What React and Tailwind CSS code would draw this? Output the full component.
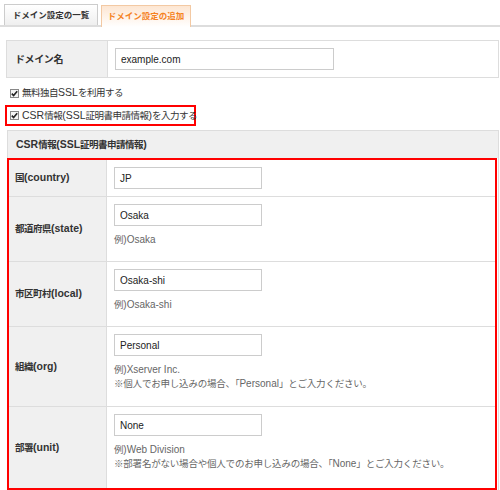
import React from 'react'

const FONT = { fontFamily: '"Liberation Sans", "Noto Sans CJK JP", sans-serif' }

// CJK runs get a narrower setting so that mixed lines keep the reference widths
const CJK = /([\u3000-\u30ff\u4e00-\u9fff\uff00-\uffef※]+)/
function T({ children, cls = 'text-[9.5px] tracking-[-0.5px]' }) {
  return children.split(CJK).map((s, i) =>
    i % 2 ? <span key={i} className={cls}>{s}</span> : s
  )
}

function Check() {
  return (
    <span className="inline-flex w-[9px] h-[9px] border border-[#888] bg-[#f4f4f4] items-center justify-center mr-[3px] shrink-0">
      <svg width="7" height="7" viewBox="0 0 7 7">
        <path d="M0.8 3.6 L2.6 5.5 L6.2 1.2" fill="none" stroke="#222" strokeWidth="1.6" />
      </svg>
    </span>
  )
}

function Field({ value, w = 'w-[148px]' }) {
  return (
    <div className={`${w} h-[22px] border border-[#ccc] flex items-center pl-[5px] text-[10px] text-[#222] bg-white`}>
      {value}
    </div>
  )
}

const rows = [
  { label: '国(country)', value: 'JP', h: 'h-[37px]', hints: [] },
  { label: '都道府県(state)', value: 'Osaka', h: 'h-[65px]', hints: ['例)Osaka'] },
  { label: '市区町村(local)', value: 'Osaka-shi', h: 'h-[65px]', hints: ['例)Osaka-shi'] },
  {
    label: '組織(org)', value: 'Personal', h: 'h-[80px]',
    hints: ['例)Xserver Inc.', '※個人でお申し込みの場合、「Personal」とご入力ください。'],
  },
  {
    label: '部署(unit)', value: 'None', h: 'h-[81px]',
    hints: ['例)Web Division', '※部署名がない場合や個人でのお申し込みの場合、「None」とご入力ください。'],
  },
]

export default function App() {
  return (
    <div className="w-[500px] h-[490px] overflow-hidden bg-white text-[#333]" style={FONT}>
      {/* tabs */}
      <div className="flex items-end gap-[3px] pl-[4px] h-[27px] border-b-2 border-[#ddd]">
        <div className="w-[94px] h-[21px] border border-b-0 border-[#ccc] bg-gradient-to-b from-white to-[#efefef] flex items-center justify-center text-[8.5px] font-bold text-[#333] whitespace-nowrap">
          ドメイン設定の一覧
        </div>
        <div className="w-[90px] h-[22px] -mb-[2px] border border-b-0 border-[#f3c9a3] bg-gradient-to-b from-[#fde6d2] to-white flex items-center justify-center text-[8.5px] font-bold text-[#f5821f] whitespace-nowrap">
          ドメイン設定の追加
        </div>
      </div>

      {/* domain */}
      <div className="mt-[13px] ml-[6px] w-[493px] h-[38px] border border-[#ddd] flex">
        <div className="w-[101px] bg-[#f0f0f0] border-r border-[#ddd] flex items-center pl-[8px] font-bold">
          <span className="text-[10px] tracking-[-0.4px]">ドメイン名</span>
        </div>
        <div className="flex items-center pl-[7px]">
          <Field value="example.com" w="w-[219px]" />
        </div>
      </div>

      {/* options */}
      <div className="mt-[7px] ml-[10px] h-[16px] flex items-center text-[10.5px] whitespace-nowrap">
        <Check />
        <span><T>無料独自SSLを利用する</T></span>
      </div>
      <div className="mt-[4px] ml-[5px] w-[191px] h-[21px] border-2 border-[#f00] flex items-center pl-[3px] text-[10.5px] whitespace-nowrap">
        <Check />
        <span><T>CSR情報(SSL証明書申請情報)を入力する</T></span>
      </div>

      {/* CSR table */}
      <div className="mt-[4px] ml-[7px] w-[492px] border border-[#ddd] border-b-0">
        <div className="h-[27px] bg-[#f0f0f0] flex items-center pl-[8px] text-[10.5px] font-bold">
          <span><T>CSR情報(SSL証明書申請情報)</T></span>
        </div>
        <div className="-ml-px mr-[1px] border-2 border-[#f00]">
          {rows.map((r, i) => (
            <div
              key={r.label}
              className={`flex ${r.h} ${i < rows.length - 1 ? 'border-b border-[#ddd]' : ''}`}
            >
              <div className="w-[98px] shrink-0 bg-[#f0f0f0] border-r border-[#ddd] flex items-center pl-[6px] text-[10.5px] font-bold">
                <span><T>{r.label}</T></span>
              </div>
              <div className="pl-[7px] pt-[7px]">
                <Field value={r.value} />
                {r.hints.length > 0 && (
                  <div className="mt-[7px] text-[10px] leading-[14px] text-[#666]">
                    {r.hints.map(h => (
                      <div key={h} className="whitespace-nowrap">
                        <T cls="text-[9.5px] tracking-[-0.2px]">{h}</T>
                      </div>
                    ))}
                  </div>
                )}
              </div>
            </div>
          ))}
        </div>
      </div>
    </div>
  )
}
